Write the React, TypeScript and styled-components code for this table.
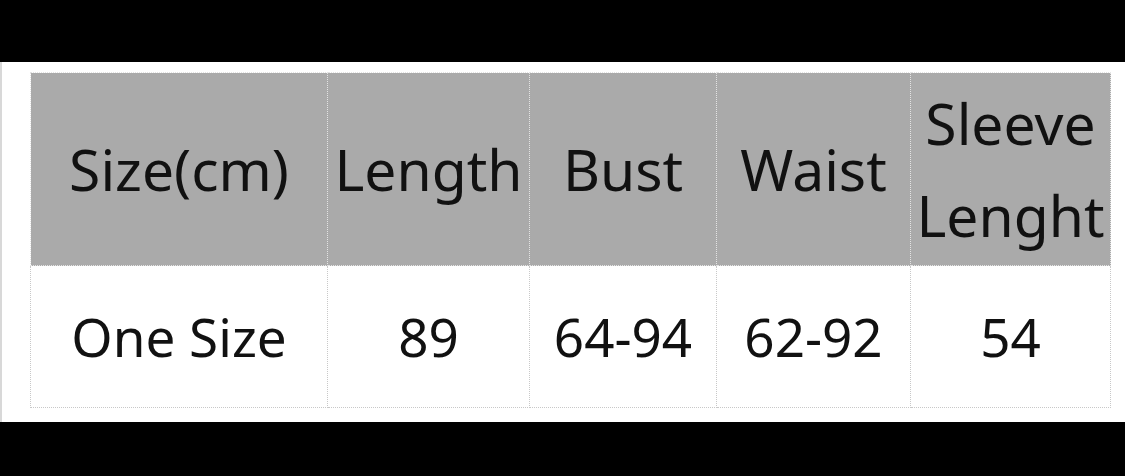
import React from 'react'
import styled, { createGlobalStyle } from 'styled-components'

const GlobalStyle = createGlobalStyle`
  html, body {
    margin: 0;
    padding: 0;
    background: #000;
  }
  body {
    width: 1125px;
    height: 476px;
    overflow: hidden;
    font-family: 'Noto Sans', 'Open Sans', sans-serif;
  }
`

const Screen = styled.div`
  width: 1125px;
  height: 476px;
  padding-top: 62px;
  box-sizing: border-box;
  background: #000;
`

const Sheet = styled.div`
  height: 360px;
  background: #fff;
  border-left: 2px solid #d8d8d8;
  box-sizing: border-box;
  padding: 10px 0 0 28px;
`

const Table = styled.table`
  border-collapse: collapse;
  table-layout: fixed;
  color: #111;
`

const HeadCell = styled.th<{ $w: number }>`
  width: ${p => p.$w}px;
  height: 192px;
  padding: 0;
  background: #aaaaaa;
  border: 1px dotted #e4e4e4;
  font-weight: 400;
  font-size: 57px;
  line-height: 92px;
  text-align: center;
  vertical-align: middle;
  white-space: nowrap;
`

const BodyCell = styled.td`
  height: 141px;
  padding: 0;
  background: #fff;
  border: 1px dotted #c8c8c8;
  font-size: 53px;
  text-align: center;
  vertical-align: middle;
  white-space: nowrap;
`

const columns = [
  { label: 'Size(cm)', width: 296 },
  { label: 'Length', width: 201 },
  { label: 'Bust', width: 186 },
  { label: 'Waist', width: 193 },
  { label: 'Sleeve\nLenght', width: 199 },
]

const values = ['One Size', '89', '64-94', '62-92', '54']

export default function App() {
  return (
    <Screen>
      <GlobalStyle />
      <Sheet>
        <Table>
          <thead>
            <tr>
              {columns.map(c => (
                <HeadCell key={c.label} $w={c.width}>
                  {c.label.split('\n').map((line, i) => (
                    <React.Fragment key={line}>
                      {i > 0 && <br />}
                      {line}
                    </React.Fragment>
                  ))}
                </HeadCell>
              ))}
            </tr>
          </thead>
          <tbody>
            <tr>
              {values.map(v => (
                <BodyCell key={v}>{v}</BodyCell>
              ))}
            </tr>
          </tbody>
        </Table>
      </Sheet>
    </Screen>
  )
}
